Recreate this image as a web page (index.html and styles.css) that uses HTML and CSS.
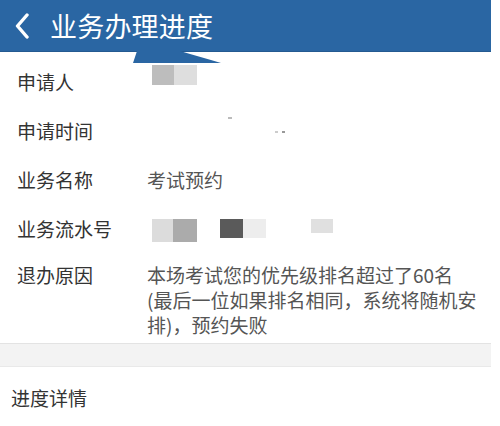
FILE: index.html
```html
<!DOCTYPE html>
<html lang="zh-CN">
<head>
<meta charset="utf-8">
<title>业务办理进度</title>
<link rel="stylesheet" href="styles.css">
</head>
<body>
<div class="page">
  <header class="topbar">
    <svg class="back" width="16" height="26" viewBox="0 0 16 26"><path d="M13 2 L3.5 13 L13 24" fill="none" stroke="#fff" stroke-width="3.4" stroke-linecap="round" stroke-linejoin="round"/></svg>
    <h1 class="title">业务办理进度</h1>
    <svg class="tab" width="92" height="13" viewBox="0 0 92 13"><path d="M4 0 L47 0 C60 4 75 8 88 12 L0 12 Z" fill="#2a66a3"/></svg>
  </header>
  <main class="info">
    <div class="row">
      <div class="label">申请人</div>
      <div class="value blocks blocks-top1">
        <span class="blk b1a"></span><span class="blk b1b"></span>
      </div>
    </div>
    <div class="row">
      <div class="label">申请时间</div>
      <div class="value specks">
        <span class="speck s1"></span><span class="speck s2"></span><span class="speck s3"></span>
      </div>
    </div>
    <div class="row">
      <div class="label">业务名称</div>
      <div class="value">考试预约</div>
    </div>
    <div class="row">
      <div class="label">业务流水号</div>
      <div class="value blocks blocks-top4">
        <span class="blk b4a"></span><span class="blk b4b"></span><span class="blk b4c"></span><span class="blk b4d"></span><span class="blk b4e"></span>
      </div>
    </div>
    <div class="row row-multi">
      <div class="label">退办原因</div>
      <div class="value reason">本场考试您的优先级排名超过了60名<br>(最后一位如果排名相同，系统将随机安排)，预约失败</div>
    </div>
  </main>
  <div class="divider"></div>
  <section class="progress">进度详情</section>
</div>
</body>
</html>
```
FILE: styles.css
```css
html, body {
  margin: 0;
  padding: 0;
  background: #fff;
}
body {
  font-family: "Noto Sans CJK SC", "Noto Sans", sans-serif;
  color: #333;
}
.page {
  width: 491px;
  background: #fff;
}
.topbar {
  position: relative;
  height: 52px;
  background: #2a66a3;
  border-bottom: 1px solid #245a91;
  display: flex;
  align-items: center;
  box-sizing: border-box;
}
.back {
  margin-left: 14px;
  margin-right: 20px;
  flex: none;
}
.title {
  margin: 0;
  font-size: 27px;
  font-weight: normal;
  color: #fff;
  line-height: 30px;
  letter-spacing: 0.2px;
}
.tab {
  position: absolute;
  left: 133px;
  top: 51px;
}
.info {
  padding-top: 5px;
}
.row {
  display: flex;
  height: 49px;
  font-size: 19px;
  line-height: 49px;
}
.label {
  width: 130px;
  padding-left: 17px;
  color: #333;
  flex: none;
}
.value {
  color: #555;
  flex: 1;
}
.blocks {
  display: flex;
  align-items: flex-start;
  padding-left: 5px;
}
.blocks-top1 { padding-top: 8px; }
.blocks-top4 { padding-top: 15px; }
.blk {
  display: block;
  flex: none;
}
.b1a { width: 22px; height: 20px; background: #bdbdbd; }
.b1b { width: 23px; height: 20px; background: #dedede; }
.b4a { width: 21px; height: 23px; background: #dcdcdc; }
.b4b { width: 24px; height: 23px; background: #ababab; }
.b4c { width: 23px; height: 19px; background: #5a5a5a; margin-left: 23px; }
.b4d { width: 23px; height: 19px; background: #ededed; }
.b4e { width: 22px; height: 14px; background: #e0e0e0; margin-left: 45px; }
.specks {
  position: relative;
}
.speck {
  position: absolute;
  width: 3px;
  height: 2px;
  background: #bbb;
}
.s1 { left: 81px; top: 11px; width: 4px; }
.s2 { left: 128px; top: 25px; background: #ccc; }
.s3 { left: 135px; top: 25px; background: #999; }
.row-multi {
  height: auto;
  line-height: 25px;
  padding-top: 9px;
  padding-bottom: 6px;
}
.reason {
  padding-right: 8px;
}
.divider {
  height: 22px;
  background: #f3f3f3;
  border-top: 1px solid #e3e3e3;
  border-bottom: 1px solid #e9e9e9;
}
.progress {
  font-size: 19px;
  line-height: 25px;
  padding: 18px 0 0 11px;
  color: #333;
}
```
